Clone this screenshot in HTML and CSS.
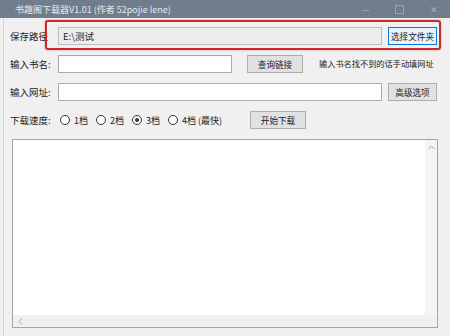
FILE: index.html
```html
<!DOCTYPE html>
<html lang="zh-CN">
<head>
    <meta charset="UTF-8">
    <title>书趣阁下载器V1.01</title>
    <link rel="stylesheet" href="styles.css">
</head>
<body>
    <div class="window">
        <!-- Title bar -->
        <div class="titlebar">
            <span class="title">书趣阁下载器V1.01 (作者 52pojie lene)</span>
            <div class="controls">
                <span class="ctl">&#8212;</span>
                <span class="ctl max"></span>
                <span class="ctl">&#10005;</span>
            </div>
        </div>

        <div class="content">
            <div class="row row-path">
                <label class="label">保存路径</label>
                <div class="field readonly path">E:\测试</div>
                <button class="btn focused">选择文件夹</button>
                <div class="highlight"></div>
            </div>

            <div class="row">
                <label class="label">输入书名:</label>
                <div class="field book"></div>
                <button class="btn query">查询链接</button>
                <span class="hint">输入书名找不到的话手动填网址</span>
            </div>

            <div class="row">
                <label class="label">输入网址:</label>
                <div class="field url"></div>
                <button class="btn">高级选项</button>
            </div>

            <div class="row">
                <label class="label">下载速度:</label>
                <div class="radios">
                    <span class="radio"><i class="dot"></i>1档</span>
                    <span class="radio"><i class="dot"></i>2档</span>
                    <span class="radio"><i class="dot checked"></i>3档</span>
                    <span class="radio"><i class="dot"></i>4档 (最快)</span>
                </div>
                <button class="btn start">开始下载</button>
            </div>

            <!-- Log box -->
            <div class="log">
                <div class="log-main">
                    <div class="log-text"></div>
                    <div class="vscroll">
                        <svg width="7" height="5" viewBox="0 0 7 5"><path d="M0.5 4 L3.5 1 L6.5 4" fill="none" stroke="#a6a6a6" stroke-width="1"/></svg>
                    </div>
                </div>
                <div class="hscroll">
                    <svg width="5" height="7" viewBox="0 0 5 7"><path d="M4 0.5 L1 3.5 L4 6.5" fill="none" stroke="#a6a6a6" stroke-width="1"/></svg>
                    <span class="corner"></span>
                </div>
            </div>
        </div>
    </div>
</body>
</html>
```

FILE: styles.css
```css
body {
    margin: 0;
    font-family: "Noto Sans CJK SC", "Noto Sans", sans-serif;
    font-size: 9px;
    color: #222;
    background: #f0f0f0;
}
.window {
    width: 450px;
    height: 336px;
    overflow: hidden;
    background: #f0f0f0;
}
.titlebar {
    height: 18px;
    background: #6f7d8c;
    color: #e6eaee;
    display: flex;
    align-items: center;
    justify-content: space-between;
    padding-left: 15px;
}
.title {
    font-size: 9px;
}
.controls {
    display: flex;
    align-items: center;
    color: rgba(255, 255, 255, 0.45);
    font-size: 9px;
}
.ctl {
    width: 33px;
    text-align: center;
}
.ctl.max {
    width: 7px;
    height: 7px;
    border: 1px solid rgba(255, 255, 255, 0.3);
    margin: 0 13px;
}
.content {
    margin-left: 3px;
    border-left: 1px solid #d2d2d2;
    padding: 9px 0 0 6px;
    height: 309px;
}
.row {
    position: relative;
    display: flex;
    align-items: center;
    height: 18px;
    margin-bottom: 10px;
}
.label {
    width: 48px;
    flex-shrink: 0;
    font-size: 9.5px;
    white-space: nowrap;
}
.field {
    height: 16px;
    border: 1px solid #a9a9a9;
    background: #fff;
    box-sizing: content-box;
    display: flex;
    align-items: center;
    padding-left: 4px;
    font-size: 9.5px;
}
.field.readonly {
    background: #ededed;
    border-color: #bcbcbc;
}
.path {
    width: 318px;
}
.book {
    width: 168px;
}
.url {
    width: 318px;
}
.btn {
    height: 18px;
    margin: 0;
    padding: 0;
    width: 49px;
    border: 1px solid #adadad;
    background: #e1e1e1;
    font-family: inherit;
    font-size: 8.6px;
    color: #222;
    line-height: 14px;
    white-space: nowrap;
}
.row .btn {
    margin-left: 6px;
}
.btn.focused {
    border-color: #0a78d7;
    background: #e5f1fb;
    box-shadow: inset 0 0 0 1px #e5f1fb;
}
.btn.query {
    margin-left: 15px;
    width: 56px;
}
.hint {
    margin-left: 16px;
    font-size: 8.2px;
    margin-top: -2px;
    white-space: nowrap;
}
.highlight {
    position: absolute;
    left: 35px;
    top: -7px;
    width: 392px;
    height: 26px;
    border: 2px solid #c8272c;
    border-radius: 3px;
    box-shadow: 0 0 2px rgba(200, 39, 44, 0.5);
    pointer-events: none;
}
.radios {
    display: flex;
    align-items: center;
    width: 184px;
    margin-left: 2px;
}
.radio {
    display: flex;
    align-items: center;
    margin-right: 8px;
    font-size: 9px;
    white-space: nowrap;
}
.dot {
    width: 8px;
    height: 8px;
    border: 1px solid #333;
    border-radius: 50%;
    background: #fff;
    margin-right: 4px;
    position: relative;
}
.dot.checked::after {
    content: "";
    position: absolute;
    left: 2px;
    top: 2px;
    width: 4px;
    height: 4px;
    border-radius: 50%;
    background: #333;
}
.btn.start {
    width: 56px;
}
.log {
    margin-left: 2px;
    width: 424px;
    height: 187px;
    border: 1px solid #a6a6a6;
    background: #fff;
    display: flex;
    flex-direction: column;
}
.log-main {
    flex: 1;
    display: flex;
}
.log-text {
    flex: 1;
}
.vscroll {
    width: 12px;
    background: #f4f4f4;
    display: flex;
    justify-content: center;
    padding-top: 5px;
    box-sizing: border-box;
}
.hscroll {
    height: 12px;
    background: #f0f0f0;
    display: flex;
    align-items: center;
    padding-left: 5px;
}
.corner {
    margin-left: auto;
    width: 12px;
    height: 12px;
    background: #f0f0f0;
}
```
